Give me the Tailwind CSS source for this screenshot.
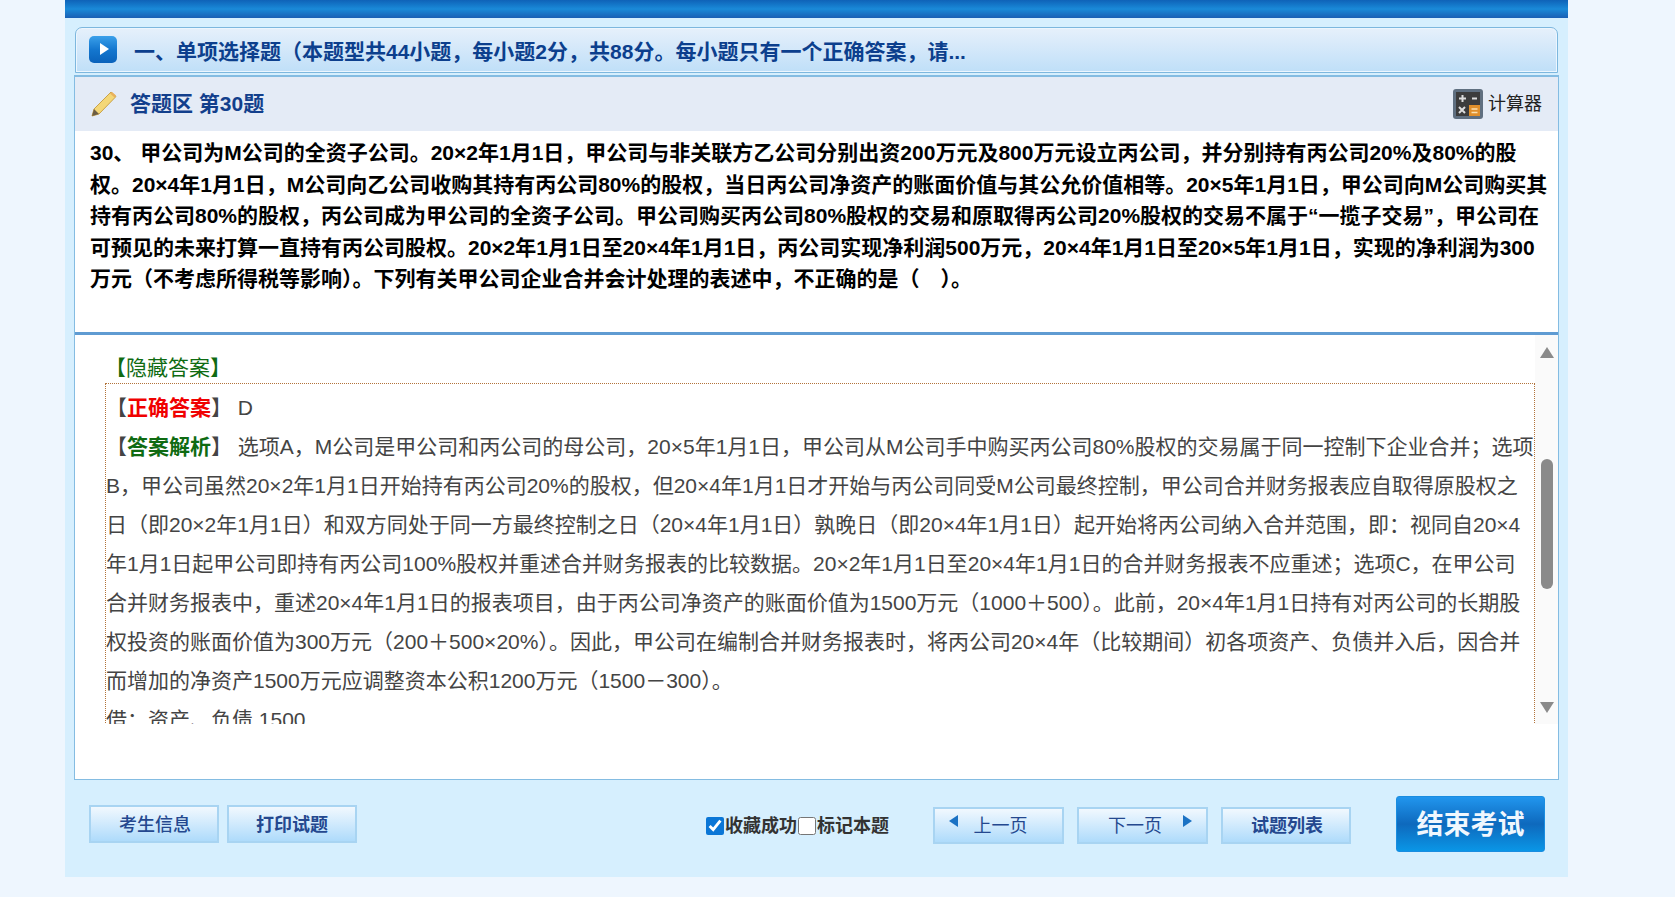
<!DOCTYPE html>
<html lang="zh">
<head>
<meta charset="utf-8">
<script src="https://cdn.jsdelivr.net/npm/@tailwindcss/browser@4"></script>
</head>
<body class="m-0 h-[897px] overflow-hidden bg-[#eef6fe] font-['Liberation_Sans','Noto_Sans_CJK_SC',sans-serif]">
<div class="ml-[65px] h-[877px] w-[1503px] bg-[#d6effe]">
  <div class="h-[18px] bg-gradient-to-b from-[#0f62b8] via-[#1a8ad8] to-[#1a5fb4]"></div>
  <div class="mx-[9px] mt-[9px] flex flex-col">
    <div class="mx-[1px] flex h-[46px] items-center rounded-t-[7px] border border-[#7db7de] bg-gradient-to-b from-[#e6f0fb] to-[#bfdff8] pl-[13px] shadow-[inset_0_0_0_1px_#ecf6fe]">
      <svg class="mb-[2px] h-[27px] w-[28px] shrink-0" viewBox="0 0 28 27"><defs><linearGradient id="p" x1="0" y1="0" x2="0" y2="1"><stop offset="0" stop-color="#3aa0ea"/><stop offset="0.5" stop-color="#1477cf"/><stop offset="1" stop-color="#0a62bb"/></linearGradient></defs><rect width="28" height="27" rx="5" fill="url(#p)"/><path d="M11 7 20 13 11 19Z" fill="#fff"/></svg>
      <div class="ml-[17px] pt-[3px] text-[21px] leading-none font-bold text-[#0c3f8d]">一、单项选择题（本题型共44小题，每小题2分，共88分。每小题只有一个正确答案，请...</div>
    </div>
    <div class="mt-[2px] flex h-[705px] flex-col border border-t-2 border-[#84bce2] bg-white">
      <div class="flex h-[54px] shrink-0 items-center justify-between bg-[#e4ebf6] pr-[16px] pb-[1px] pl-[15px]">
        <div class="flex items-center">
          <svg class="h-[28px] w-[28px]" viewBox="0 0 28 28"><path d="M21 2 26 6.500 9 24 2 26 4 19Z" fill="#f4d777" stroke="#c9a24a"/><path d="M20 3.500 24.500 7.500 26 5.500 22 2Z" fill="#e9b15c"/><path d="M2 26 4 19 9 24Z" fill="#6b5d45"/></svg>
          <div class="ml-[12px] text-[21px] leading-none font-bold text-[#123f8c]">答题区 第30题</div>
        </div>
        <div class="flex items-center">
          <svg class="h-[30px] w-[30px]" viewBox="0 0 30 30"><rect width="30" height="30" rx="3" fill="#5f6f80"/><rect x="3" y="3" width="24" height="24" fill="#3c3c3c"/><rect x="16" y="16" width="11" height="11" fill="#e08f2b"/><path d="M6 9.500H13M9.500 6V13M19 9.500H24M6 18 12 24M12 18 6 24" stroke="#ddd" stroke-width="2"/><path d="M18.500 20H24.500M18.500 23.500H24.500" stroke="#fbe0b0" stroke-width="1.500"/></svg>
          <span class="ml-[5px] text-[18px] leading-none text-[#222]">计算器</span>
        </div>
      </div>
      <div class="h-[204px] shrink-0 border-b-[3px] border-[#5f9bd2] pt-[6px] pl-[15px] text-[21px] leading-[31.500px] font-bold whitespace-nowrap text-black">
        30、&nbsp;甲公司为M公司的全资子公司。20×2年1月1日，甲公司与非关联方乙公司分别出资200万元及800万元设立丙公司，并分别持有丙公司20%及80%的股<br>
        权。20×4年1月1日，M公司向乙公司收购其持有丙公司80%的股权，当日丙公司净资产的账面价值与其公允价值相等。20×5年1月1日，甲公司向M公司购买其<br>
        持有丙公司80%的股权，丙公司成为甲公司的全资子公司。甲公司购买丙公司80%股权的交易和原取得丙公司20%股权的交易不属于“一揽子交易”，甲公司在<br>
        可预见的未来打算一直持有丙公司股权。20×2年1月1日至20×4年1月1日，丙公司实现净利润500万元，20×4年1月1日至20×5年1月1日，实现的净利润为300<br>
        万元（不考虑所得税等影响）。下列有关甲公司企业合并会计处理的表述中，不正确的是（　）。
      </div>
      <div class="relative h-[389px] shrink-0 overflow-hidden pl-[30px]">
        <div class="flex h-[48px] items-center pt-[16px] text-[21px] leading-none text-[#0f6b12]">【隐藏答案】</div>
        <div class="h-[400px] w-[1430px] border border-dotted border-[#b2733a] pt-[4px] text-[21px] leading-[39px] whitespace-nowrap text-[#444]">
          <div class="h-[39px]">【<b class="text-[#f00000]">正确答案</b>】 D</div>
          【<b class="text-[#0f6b12]">答案解析</b>】 选项A，M公司是甲公司和丙公司的母公司，20×5年1月1日，甲公司从M公司手中购买丙公司80%股权的交易属于同一控制下企业合并；选项<br>
          B，甲公司虽然20×2年1月1日开始持有丙公司20%的股权，但20×4年1月1日才开始与丙公司同受M公司最终控制，甲公司合并财务报表应自取得原股权之<br>
          日（即20×2年1月1日）和双方同处于同一方最终控制之日（20×4年1月1日）孰晚日（即20×4年1月1日）起开始将丙公司纳入合并范围，即：视同自20×4<br>
          年1月1日起甲公司即持有丙公司100%股权并重述合并财务报表的比较数据。20×2年1月1日至20×4年1月1日的合并财务报表不应重述；选项C，在甲公司<br>
          合并财务报表中，重述20×4年1月1日的报表项目，由于丙公司净资产的账面价值为1500万元（1000＋500）。此前，20×4年1月1日持有对丙公司的长期股<br>
          权投资的账面价值为300万元（200＋500×20%）。因此，甲公司在编制合并财务报表时，将丙公司20×4年（比较期间）初各项资产、负债并入后，因合并<br>
          而增加的净资产1500万元应调整资本公积1200万元（1500－300）。<br>
          借：资产、负债 1500
        </div>
        <div class="absolute top-0 right-0 flex h-full w-[23px] flex-col items-center bg-[#fafafa]">
          <div class="mt-[12px] h-0 w-0 border-x-[7px] border-b-[11px] border-x-transparent border-b-[#8a8a8a]"></div>
          <div class="mt-[101px] h-[130px] w-[12px] rounded-[6px] bg-[#8a8a8a]"></div>
          <div class="mt-[113px] h-0 w-0 border-x-[7px] border-t-[11px] border-x-transparent border-t-[#8a8a8a]"></div>
        </div>
      </div>
    </div>
  </div>
  <div class="mt-[25px] flex items-start text-[#1d4b9b]">
    <button class="ml-[24px] h-[38px] w-[130px] border-2 border-[#a8d4f2] bg-gradient-to-b from-[#f1f8fe] to-[#aedbfb] pt-[2px] pl-[2px] text-[18px] leading-none font-medium text-[#24488f]">考生信息</button>
    <button class="ml-[8px] h-[38px] w-[130px] border-2 border-[#a8d4f2] bg-gradient-to-b from-[#f1f8fe] to-[#aedbfb] pt-[2px] text-[18px] leading-none font-bold text-[#24488f]">打印试题</button>
    <div class="ml-[349px] flex h-[42px] items-center text-[18px] leading-none font-bold text-[#333]">
      <input type="checkbox" checked class="m-0 h-[18px] w-[18px] accent-[#0b76d6]"><span class="ml-[1px]">收藏成功</span><input type="checkbox" class="m-0 ml-[1px] h-[18px] w-[18px]"><span class="ml-[1px]">标记本题</span>
    </div>
    <button class="relative ml-[44px] mt-[2px] h-[37px] w-[131px] border-2 border-[#a8d4f2] bg-gradient-to-b from-[#f1f8fe] to-[#aedbfb] pl-[4px] text-[18px] leading-none text-[#24488f]"><span class="absolute top-[6px] left-[14px] h-0 w-0 border-y-[6px] border-r-[9px] border-y-transparent border-r-[#1b72c4]"></span>上一页</button>
    <button class="relative ml-[13px] mt-[2px] h-[37px] w-[131px] border-2 border-[#a8d4f2] bg-gradient-to-b from-[#f1f8fe] to-[#aedbfb] pr-[15px] text-[18px] leading-none text-[#24488f]">下一页<span class="absolute top-[6px] right-[14px] h-0 w-0 border-y-[6px] border-l-[9px] border-y-transparent border-l-[#1b72c4]"></span></button>
    <button class="ml-[13px] mt-[2px] h-[37px] w-[130px] border-2 border-[#a8d4f2] bg-gradient-to-b from-[#f1f8fe] to-[#aedbfb] pl-[2px] text-[18px] leading-none font-bold text-[#24488f]">试题列表</button>
    <button class="ml-[45px] -mt-[9px] h-[56px] w-[149px] rounded-[3px] border border-[#1a8de0] bg-gradient-to-b from-[#2196ee] via-[#0e69bd] to-[#0a96e6] pt-[2px] text-[27px] leading-none font-bold text-[#f0f7fe]">结束考试</button>
  </div>
</div>
</body>
</html>
